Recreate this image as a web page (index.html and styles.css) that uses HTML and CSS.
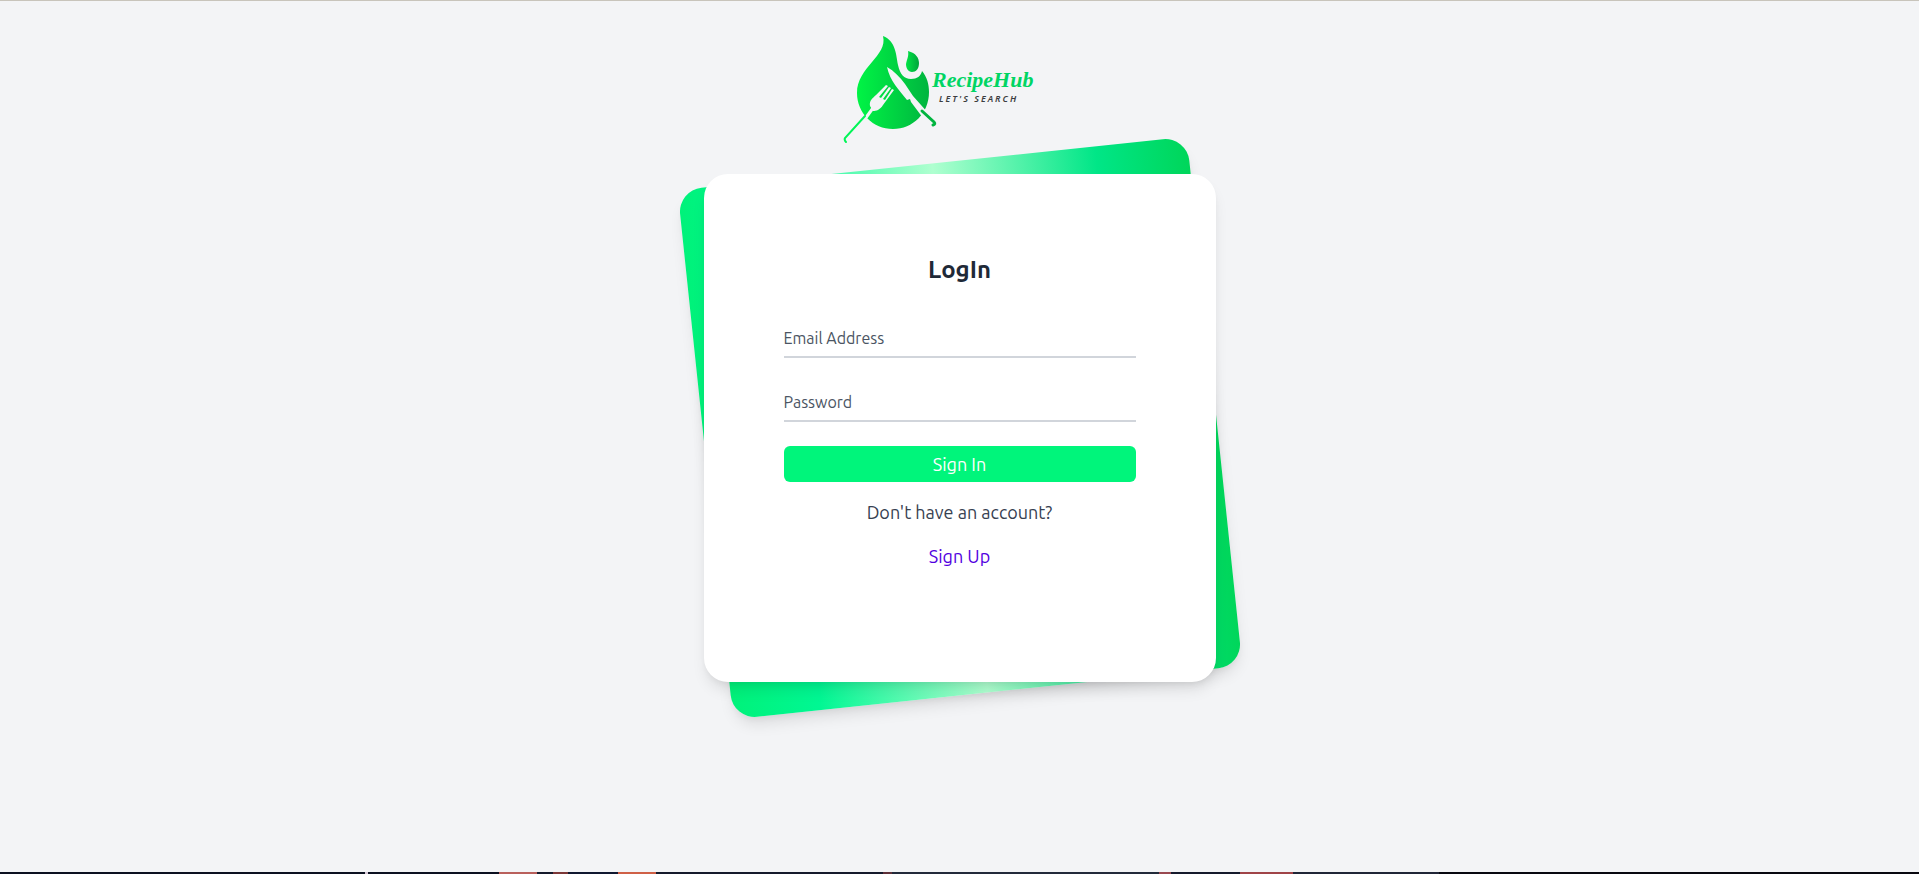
FILE: index.html
```html
<!DOCTYPE html>
<html lang="en">
<head>
<meta charset="utf-8">
<title>RecipeHub - LogIn</title>
<link rel="stylesheet" href="styles.css">
</head>
<body>
<main class="page">
  <svg class="logo" viewBox="0 0 220 130" role="img" aria-label="RecipeHub, let's search">
    <defs>
      <linearGradient id="leaf" gradientUnits="userSpaceOnUse" x1="26" y1="0" x2="100" y2="0">
        <stop offset="0" stop-color="#00f545"/>
        <stop offset="1" stop-color="#00b43f"/>
      </linearGradient>
      <linearGradient id="drop" x1="0" y1="0" x2="1" y2="0">
        <stop offset="0" stop-color="#00e545"/>
        <stop offset="1" stop-color="#00a53c"/>
      </linearGradient>
    </defs>
    <path fill="url(#leaf)" d="M53 16C66 21 66 35 68 45C70 54 74 59 81 59C87 59 91 56 92 51C97 57 99 64 99 72C99 93 83 109 63 109C43 109 27 93 27 73C27 47 58 36 53 16Z"/>
    <path fill="url(#drop)" d="M78 31C86 33 89 38 89 43C89 49 86 52 82 52C78 52 76 48 76 44C77 39 79 36 78 31Z"/>
    <path fill="#f3f4f6" d="M57 47C64 51 70 57 75 64L83 76L99 94L93 98L81 82L80 79L77 80C69 70 60 61 57 47Z"/>
    <path class="fork" d="M35 99L43 88"/>
    <path fill="#f3f4f6" d="M40 86C39 80 43 78 46 75L56 65L58 66L49 77L51 78L59 67L61 68L53 79L55 80L62 69L64 70L53 85C50 90 46 91 43 91Z"/>
    <path fill="none" stroke="#00f557" stroke-width="2" stroke-linecap="round" d="M35 96L15 118Q14 120 16 122"/>
    <path fill="none" stroke="#00b43f" stroke-width="3" stroke-linecap="round" d="M92 91L104 102Q106 104 103 105"/>
    <text class="brand" x="102" y="67">RecipeHub</text>
    <text class="tagline" x="109" y="82">LET'S SEARCH</text>
  </svg>
  <section class="login">
    <div class="backdrop"></div>
    <div class="card">
      <h1 class="title">LogIn</h1>
      <form class="form">
        <input class="field" type="email" aria-label="Email Address" placeholder="Email Address">
        <input class="field" type="password" aria-label="Password" placeholder="Password">
        <button class="submit" type="button">Sign In</button>
        <p class="prompt">Don't have an account?</p>
        <a class="signup" href="#">Sign Up</a>
      </form>
    </div>
  </section>
</main>
<div class="strip"></div>
</body>
</html>
```
FILE: styles.css
```css
* { box-sizing: border-box; }
body {
  margin: 0;
  min-height: 100vh;
  display: flex;
  flex-direction: column;
  background: #f3f4f6;
  border-top: 1px solid #c8c4bb;
  color: #1f2937;
  font-family: Ubuntu, "Noto Sans", sans-serif;
}
.page {
  flex: 1;
  display: flex;
  flex-direction: column;
  align-items: center;
  padding-top: 19px;
}
.logo { width: 220px; height: 130px; margin-right: 40px; }
.fork { fill: none; stroke: #f3f4f6; stroke-width: 3; }
.brand {
  font: italic 700 22px "Liberation Serif", serif;
  fill: #00d563;
}
.tagline {
  font: italic 600 9px "Noto Sans", sans-serif;
  letter-spacing: 2px;
  fill: #3b3d40;
}
.login {
  position: relative;
  width: 100%;
  max-width: 512px;
  margin-top: 24px;
}
.backdrop {
  position: absolute;
  inset: -12px 0;
  border-radius: 24px;
  background: linear-gradient(to right, #00f27a, #00f793 17%, #afffd0 50%, #00e687 82%, #00d65a);
  box-shadow: 0 10px 15px -3px rgba(0, 0, 0, .1), 0 4px 6px -2px rgba(0, 0, 0, .05);
  transform: rotate(-6deg);
}
.card {
  position: relative;
  padding: 80px;
  border-radius: 24px;
  background: #fff;
  box-shadow: 0 10px 15px -3px rgba(0, 0, 0, .1), 0 4px 6px -2px rgba(0, 0, 0, .05);
}
.title {
  margin: 0;
  font-size: 24px;
  line-height: 32px;
  text-align: center;
}
.form {
  display: flex;
  flex-direction: column;
  padding: 32px 0;
  font-size: 18px;
  line-height: 28px;
  text-align: center;
}
.field {
  width: 100%;
  height: 40px;
  margin-bottom: 24px;
  padding: 2px 0 0;
  border: 0;
  border-bottom: 2px solid #d1d5db;
  background: transparent;
  color: #111827;
  font: 16px/24px Ubuntu, "Noto Sans", sans-serif;
}
.field::placeholder { color: #4b5563; opacity: 1; }
.submit {
  padding: 4px 8px;
  border: 0;
  border-radius: 6px;
  background: #00f57b;
  color: #fff;
  font: 18px/28px Ubuntu, "Noto Sans", sans-serif;
}
.prompt { margin: 16px 0; color: #374151; }
.signup { color: #5200e0; text-decoration: none; }
.strip {
  height: 2px;
  background: linear-gradient(to right, #0b1020 0 19%, #d8c8d8 19% 19.2%, #0b1020 19.2% 26%, #b9605c 26% 28%, #151a2c 28% 28.8%, #7d3838 28.8% 29.6%, #101830 29.6% 32.2%, #cf6046 32.2% 34.2%, #151a2c 34.2% 46%, #5e3038 46% 46.5%, #222a3a 46.5% 60.4%, #994850 60.4% 61%, #151a2c 61% 64.6%, #a04448 64.6% 67.4%, #202637 67.4% 75%, #08080f 75%);
}
```
